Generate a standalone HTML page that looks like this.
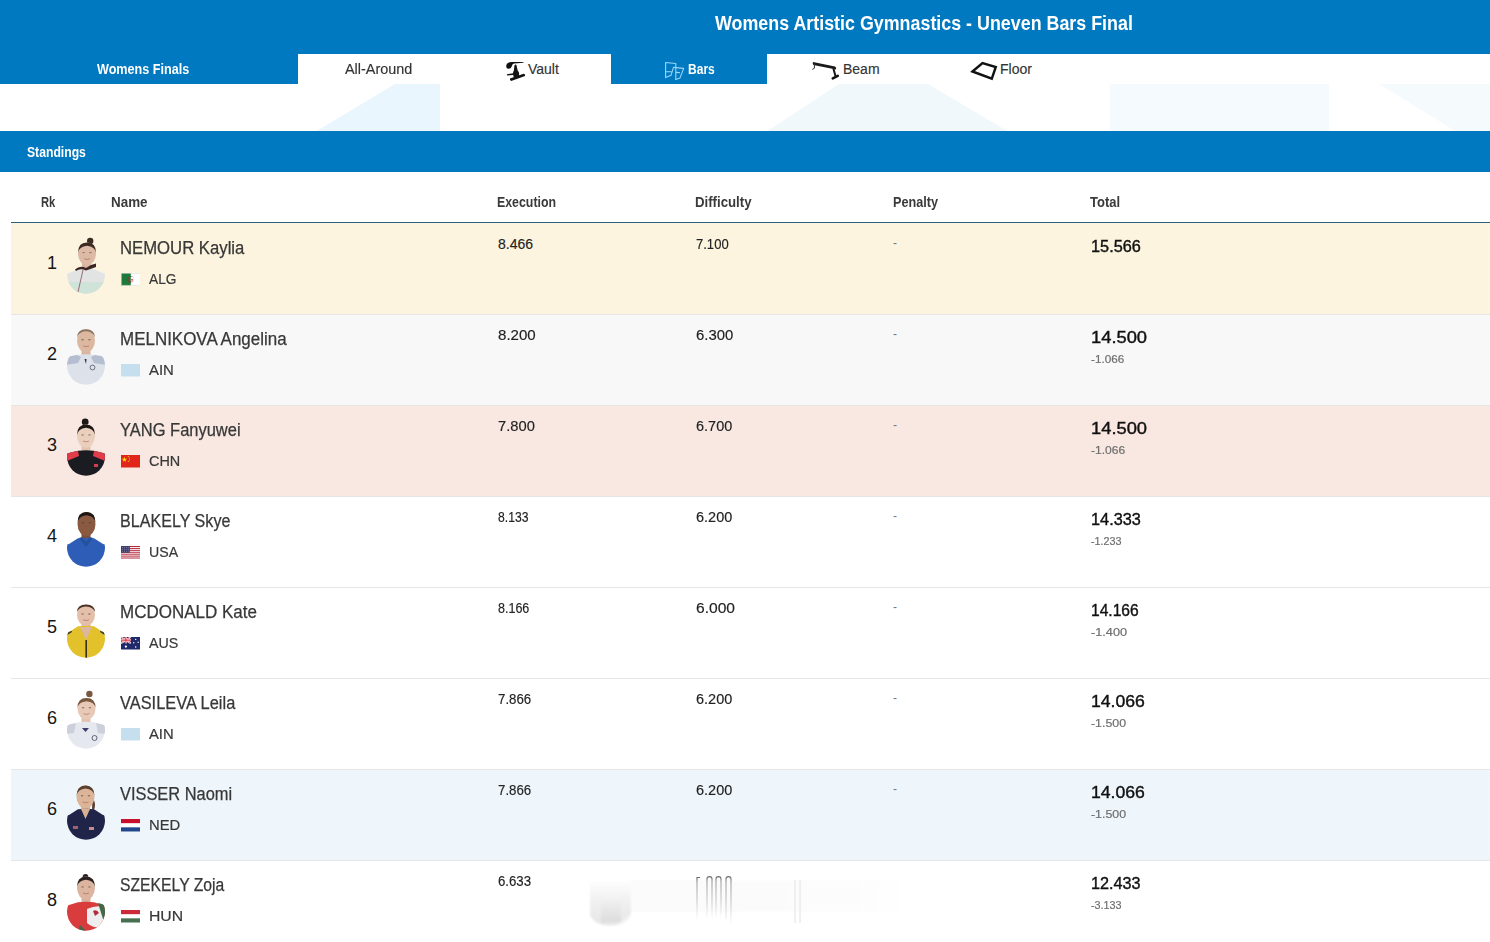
<!DOCTYPE html>
<html><head><meta charset="utf-8"><style>
*{margin:0;padding:0;box-sizing:border-box}
html,body{width:1490px;height:942px;overflow:hidden;background:#fff;font-family:"Liberation Sans",sans-serif;color:#333}
.a{position:absolute;white-space:nowrap;line-height:1;transform-origin:0 0}
.blue{position:absolute;background:#0079c1}
.wt{position:absolute;background:#fff}
.row{position:absolute;left:11px;width:1479px}
.sep{position:absolute;left:11px;width:1479px;height:1px;background:#e6e6e6}
.fl{position:absolute;left:120.6px;width:19.6px;height:12.5px;filter:blur(.3px)}
.ph{position:absolute;left:66px;width:40px;height:60px}
.tab{color:#333;font-size:14px;-webkit-text-stroke:.15px #333}
.wb{color:#fff;font-weight:bold;font-size:14px}
.hd{font-size:14px;font-weight:bold;color:#3a3a3a}
.rk{font-size:18px;color:#151515;text-align:right;width:30px;left:25px}
.nm{font-size:17.5px;color:#383838;left:120px;-webkit-text-stroke:.25px #383838}
.cc{font-size:15px;color:#383838;left:149px;-webkit-text-stroke:.2px #383838}
.v{font-size:14px;color:#222;-webkit-text-stroke:.15px #222}
.pen{font-size:12px;color:#777;left:893px}
.tot{font-size:17px;color:#111;left:1091px;-webkit-text-stroke:.4px #111}
.dif{font-size:11.5px;color:#6e6e6e;left:1091px;-webkit-text-stroke:.2px #6e6e6e}
</style></head><body>
<div class="blue" style="left:0;top:0;width:1490px;height:84px"></div>
<div class="a " style="left:715.0px;top:13.0px;transform:scaleX(0.8930);font-size:20px;font-weight:bold;color:#fff">Womens Artistic Gymnastics - Uneven Bars Final</div>
<div class="wt" style="left:298px;top:54px;width:313px;height:30px"></div>
<div class="wt" style="left:767px;top:54px;width:723px;height:30px"></div>
<div class="a wb" style="left:96.5px;top:62.0px;transform:scaleX(0.9000);">Womens Finals</div>
<div class="a tab" style="left:345.0px;top:62.3px;transform:scaleX(1.0300);">All-Around</div>
<div class="a tab" style="left:528.0px;top:62.0px;">Vault</div>
<div class="a wb" style="left:688.0px;top:62.0px;transform:scaleX(0.8600);">Bars</div>
<div class="a tab" style="left:843.0px;top:62.0px;">Beam</div>
<div class="a tab" style="left:1000.0px;top:62.0px;">Floor</div>
<svg style="position:absolute;left:0;top:84px" width="1490" height="48" viewBox="0 0 1490 48"><path d="M315 48L395 0H440V48Z" fill="#e9f6fd"/><path d="M766 48L839 0H928L1009 48Z" fill="#f1f8fc"/><path d="M1110 0H1329V48H1110Z" fill="#f4fafd"/><path d="M1379 0H1490V48H1457Z" fill="#f5fafd"/></svg>
<div class="blue" style="left:0;top:131px;width:1490px;height:41px"></div>
<div class="a wb" style="left:26.5px;top:145.0px;transform:scaleX(0.8700);">Standings</div>
<div class="a hd" style="left:41.2px;top:194.6px;transform:scaleX(0.8000);">Rk</div>
<div class="a hd" style="left:111.4px;top:194.6px;transform:scaleX(0.9580);">Name</div>
<div class="a hd" style="left:497.3px;top:194.6px;transform:scaleX(0.8830);">Execution</div>
<div class="a hd" style="left:694.5px;top:194.6px;transform:scaleX(0.9440);">Difficulty</div>
<div class="a hd" style="left:893.2px;top:194.6px;transform:scaleX(0.9030);">Penalty</div>
<div class="a hd" style="left:1090.4px;top:194.6px;transform:scaleX(0.9260);">Total</div>
<div style="position:absolute;left:11px;top:222px;width:1479px;height:1px;background:#2b5f7c"></div>
<div class="row" style="top:223px;height:91px;background:#fcf4de"></div>
<div class="sep" style="top:314px"></div>
<div class="a rk" style="left:27.0px;top:254.0px;">1</div>
<svg style="position:absolute;left:60px;top:232px;filter:blur(.35px)" width="52" height="66" viewBox="0 0 52 66"><defs><clipPath id="p0"><circle cx="26" cy="42.7" r="19"/></clipPath></defs><rect x="22" y="28" width="9" height="8" fill="#d8b4a0"/><g clip-path="url(#p0)"><path d="M5 66V43.0 Q6 41.4 9 41.0 L18 37.3 Q26 36.2 34 37.3 L43 41.0 Q46 41.4 47 43.0 V66Z" fill="#e2e4e4"/><rect x="5" y="50" width="42" height="16" fill="#cfe3d8"/><path d="M15 37.5 Q20 33 26 36 Q31 32 36 31.5 L36 35 Q30 37 26 38.5 Q20 36 16 39Z" fill="#3a2424"/><path d="M23 38 L18 60" stroke="#7a3a40" stroke-width=".7"/></g><circle cx="30.2" cy="9" r="3.2" fill="#3b2b22"/><ellipse cx="27.0" cy="21.8" rx="9.0" ry="11.2" fill="#dcbaa6"/><path d="M18.0 20.8 Q18.0 10.5 27.0 10.5 Q36.0 10.5 36.0 20.8 Q35.0 14.5 27.0 13.7 Q19.0 14.5 18.0 20.8Z" fill="#3b2b22"/><ellipse cx="23.6" cy="20.6" rx="1.3" ry=".7" fill="#4a3630" opacity=".55"/><ellipse cx="30.4" cy="20.6" rx="1.3" ry=".7" fill="#4a3630" opacity=".55"/><path d="M24.0 26.7 Q27.0 28.3 30.0 26.7" stroke="#9a5a50" stroke-width=".9" fill="none" opacity=".6"/></svg>
<div class="a nm" style="left:120.0px;top:240.0px;transform:scaleX(0.9544);">NEMOUR Kaylia</div>
<svg class="fl" style="top:273px" viewBox="0 0 20 13" preserveAspectRatio="none"><rect width="20" height="13" fill="#fff"/><rect width="10" height="13" fill="#1e7a3a"/><circle cx="10" cy="6.5" r="3" fill="#d21034"/><circle cx="10.9" cy="6.5" r="2.5" fill="#fff"/><rect x="7.4" y="3" width="2.6" height="7" fill="#1e7a3a"/><path d="M7.5 4.5A3 3 0 0 0 10 9.5" stroke="#d21034" stroke-width=".6" fill="none"/><path d="M11.2 5.5l.4 1 1-.1-.8.7.3 1-.9-.6-.8.6.3-1-.8-.7 1 .1z" fill="#d21034"/><rect x="0.3" y="0.3" width="19.4" height="12.4" fill="none" stroke="#ddd" stroke-width="0.6"/></svg>
<div class="a cc" style="left:149.0px;top:270.5px;transform:scaleX(0.9172);">ALG</div>
<div class="a v" style="left:498.0px;top:237.0px;">8.466</div>
<div class="a v" style="left:696.0px;top:237.0px;transform:scaleX(0.9314);">7.100</div>
<div class="a pen" style="left:893.0px;top:237.0px;">-</div>
<div class="a tot" style="left:1091.0px;top:238.0px;transform:scaleX(0.9590);">15.566</div>
<div class="row" style="top:315px;height:90px;background:#f8f8f8"></div>
<div class="sep" style="top:405px"></div>
<div class="a rk" style="left:27.0px;top:345.0px;">2</div>
<svg style="position:absolute;left:60px;top:323px;filter:blur(.35px)" width="52" height="66" viewBox="0 0 52 66"><defs><clipPath id="p1"><circle cx="26" cy="42.7" r="19"/></clipPath></defs><rect x="21.5" y="25" width="9" height="9" fill="#d9b49e"/><g clip-path="url(#p1)"><path d="M5 66V37.0 Q6 35.4 9 35.0 L18 31.8 Q26 30.7 34 31.8 L43 35.0 Q46 35.4 47 37.0 V66Z" fill="#dde1ea"/><path d="M5 36 Q8 33 17 32 L21 34 L18 40 L6 42Z" fill="#b4bed0"/><path d="M47 36 Q44 33 35 32 L31 34 L34 40 L46 42Z" fill="#b4bed0"/><path d="M24.5 36 L26.5 36 L26 41Z" fill="#2a2a3a"/><circle cx="32.5" cy="44.5" r="2.4" fill="none" stroke="#556" stroke-width=".8"/></g><ellipse cx="26.0" cy="17.8" rx="9.0" ry="11.5" fill="#ddb8a0"/><path d="M17.0 14.8 Q17.0 6.3 26.0 6.3 Q35.0 6.3 35.0 14.8 Q33.5 8.8 26.0 8.3 Q18.5 8.8 17.0 14.8Z" fill="#8b7560"/><ellipse cx="22.6" cy="16.7" rx="1.3" ry=".7" fill="#4a3630" opacity=".55"/><ellipse cx="29.4" cy="16.7" rx="1.3" ry=".7" fill="#4a3630" opacity=".55"/><path d="M23.0 22.9 Q26.0 24.5 29.0 22.9" stroke="#9a5a50" stroke-width=".9" fill="none" opacity=".6"/></svg>
<div class="a nm" style="left:120.0px;top:331.0px;transform:scaleX(0.9695);">MELNIKOVA Angelina</div>
<svg class="fl" style="top:364px" viewBox="0 0 20 13" preserveAspectRatio="none"><rect width="20" height="13" fill="#c5dfee"/></svg>
<div class="a cc" style="left:149.0px;top:361.5px;transform:scaleX(0.9954);">AIN</div>
<div class="a v" style="left:498.0px;top:328.0px;transform:scaleX(1.0771);">8.200</div>
<div class="a v" style="left:696.0px;top:328.0px;transform:scaleX(1.0629);">6.300</div>
<div class="a pen" style="left:893.0px;top:328.0px;">-</div>
<div class="a tot" style="left:1091.0px;top:329.0px;transform:scaleX(1.0780);">14.500</div>
<div class="a dif" style="left:1091.0px;top:354.1px;transform:scaleX(1.0160);">-1.066</div>
<div class="row" style="top:406px;height:90px;background:#f8e8e1"></div>
<div class="sep" style="top:496px"></div>
<div class="a rk" style="left:27.0px;top:436.0px;">3</div>
<svg style="position:absolute;left:60px;top:414px;filter:blur(.35px)" width="52" height="66" viewBox="0 0 52 66"><defs><clipPath id="p2"><circle cx="26" cy="42.7" r="19"/></clipPath></defs><rect x="21.5" y="29" width="9" height="9" fill="#e2c4ae"/><g clip-path="url(#p2)"><path d="M5 66V41.0 Q6 39.4 9 39.0 L18 36.7 Q26 35.6 34 36.7 L43 39.0 Q46 39.4 47 41.0 V66Z" fill="#1b1b22"/><path d="M5 42 Q8 38 18 37 L19 42 L7 47Z" fill="#e23c4a"/><path d="M47 42 Q44 38 34 37 L33 42 L45 47Z" fill="#e23c4a"/><rect x="34" y="50" width="4" height="3" fill="#d04050"/></g><circle cx="25.2" cy="8" r="3.4" fill="#1c1614"/><ellipse cx="26.0" cy="22.1" rx="9.0" ry="11.6" fill="#e9cfbc"/><path d="M17.0 21.1 Q17.0 10.5 26.0 10.5 Q35.0 10.5 35.0 21.1 Q34.0 14.5 26.0 13.7 Q18.0 14.5 17.0 21.1Z" fill="#1c1614"/><ellipse cx="22.6" cy="20.9" rx="1.3" ry=".7" fill="#4a3630" opacity=".55"/><ellipse cx="29.4" cy="20.9" rx="1.3" ry=".7" fill="#4a3630" opacity=".55"/><path d="M23.0 27.1 Q26.0 28.7 29.0 27.1" stroke="#9a5a50" stroke-width=".9" fill="none" opacity=".6"/></svg>
<div class="a nm" style="left:120.0px;top:422.0px;transform:scaleX(0.9417);">YANG Fanyuwei</div>
<svg class="fl" style="top:455px" viewBox="0 0 20 13" preserveAspectRatio="none"><rect width="20" height="13" fill="#e1251b"/><path d="M3.5 1.8l.7 2 2.1 0-1.7 1.3.6 2-1.7-1.2-1.7 1.2.6-2-1.7-1.3 2.1 0z" fill="#ffde00"/><circle cx="7.5" cy="1.6" r=".6" fill="#ffde00"/><circle cx="8.6" cy="3.2" r=".6" fill="#ffde00"/><circle cx="8.6" cy="5.2" r=".6" fill="#ffde00"/><circle cx="7.5" cy="6.8" r=".6" fill="#ffde00"/></svg>
<div class="a cc" style="left:149.0px;top:452.5px;transform:scaleX(0.9623);">CHN</div>
<div class="a v" style="left:498.0px;top:419.0px;transform:scaleX(1.0514);">7.800</div>
<div class="a v" style="left:696.0px;top:419.0px;transform:scaleX(1.0343);">6.700</div>
<div class="a pen" style="left:893.0px;top:419.0px;">-</div>
<div class="a tot" style="left:1091.0px;top:420.0px;transform:scaleX(1.0780);">14.500</div>
<div class="a dif" style="left:1091.0px;top:445.1px;transform:scaleX(1.0480);">-1.066</div>
<div class="row" style="top:497px;height:90px;background:#ffffff"></div>
<div class="sep" style="top:587px"></div>
<div class="a rk" style="left:27.0px;top:527.0px;">4</div>
<svg style="position:absolute;left:60px;top:505px;filter:blur(.35px)" width="52" height="66" viewBox="0 0 52 66"><defs><clipPath id="p3"><circle cx="26" cy="42.7" r="19"/></clipPath></defs><rect x="21.5" y="27" width="9" height="9" fill="#7e5038"/><g clip-path="url(#p3)"><path d="M5 66V41.0 Q6 39.4 9 39.0 L18 33.3 Q26 32.2 34 33.3 L43 39.0 Q46 39.4 47 41.0 V66Z" fill="#2d5db6"/><path d="M19 33 L26 42 L33 33 L30 32 L26 37 L22 32Z" fill="#24509e"/></g><ellipse cx="26.5" cy="19.0" rx="9.0" ry="12.0" fill="#8a5a40"/><path d="M17.5 18.0 Q17.5 7.0 26.5 7.0 Q35.5 7.0 35.5 18.0 Q34.5 11.0 26.5 10.2 Q18.5 11.0 17.5 18.0Z" fill="#1e1612"/><ellipse cx="23.1" cy="17.8" rx="1.3" ry=".7" fill="#4a3630" opacity=".55"/><ellipse cx="29.9" cy="17.8" rx="1.3" ry=".7" fill="#4a3630" opacity=".55"/><path d="M23.5 24.3 Q26.5 25.9 29.5 24.3" stroke="#9a5a50" stroke-width=".9" fill="none" opacity=".6"/></svg>
<div class="a nm" style="left:120.0px;top:513.0px;transform:scaleX(0.9203);">BLAKELY Skye</div>
<svg class="fl" style="top:546px" viewBox="0 0 20 13" preserveAspectRatio="none"><rect width="20" height="13" fill="#fff"/><rect y="0.00" width="20" height="1" fill="#b22234"/><rect y="2.00" width="20" height="1" fill="#b22234"/><rect y="4.00" width="20" height="1" fill="#b22234"/><rect y="6.00" width="20" height="1" fill="#b22234"/><rect y="8.00" width="20" height="1" fill="#b22234"/><rect y="10.00" width="20" height="1" fill="#b22234"/><rect y="12.00" width="20" height="1" fill="#b22234"/><rect width="9" height="7" fill="#3c3b6e"/><g fill="#c8c8dc"><rect x="1.0" y="1.0" width=".7" height=".7"/><rect x="3.0" y="1.0" width=".7" height=".7"/><rect x="5.0" y="1.0" width=".7" height=".7"/><rect x="7.0" y="1.0" width=".7" height=".7"/><rect x="1.0" y="3.0" width=".7" height=".7"/><rect x="3.0" y="3.0" width=".7" height=".7"/><rect x="5.0" y="3.0" width=".7" height=".7"/><rect x="7.0" y="3.0" width=".7" height=".7"/><rect x="1.0" y="5.0" width=".7" height=".7"/><rect x="3.0" y="5.0" width=".7" height=".7"/><rect x="5.0" y="5.0" width=".7" height=".7"/><rect x="7.0" y="5.0" width=".7" height=".7"/></g></svg>
<div class="a cc" style="left:149.0px;top:543.5px;transform:scaleX(0.9438);">USA</div>
<div class="a v" style="left:498.0px;top:510.0px;transform:scaleX(0.8686);">8.133</div>
<div class="a v" style="left:696.0px;top:510.0px;transform:scaleX(1.0343);">6.200</div>
<div class="a pen" style="left:893.0px;top:510.0px;">-</div>
<div class="a tot" style="left:1091.0px;top:511.0px;transform:scaleX(0.9590);">14.333</div>
<div class="a dif" style="left:1091.0px;top:536.1px;transform:scaleX(0.9380);">-1.233</div>
<div class="row" style="top:588px;height:90px;background:#ffffff"></div>
<div class="sep" style="top:678px"></div>
<div class="a rk" style="left:27.0px;top:618.0px;">5</div>
<svg style="position:absolute;left:60px;top:596px;filter:blur(.35px)" width="52" height="66" viewBox="0 0 52 66"><defs><clipPath id="p4"><circle cx="26" cy="42.7" r="19"/></clipPath></defs><rect x="21.5" y="26" width="9" height="9" fill="#dcb6a0"/><g clip-path="url(#p4)"><path d="M5 66V38.0 Q6 36.4 9 36.0 L18 30.3 Q26 29.2 34 30.3 L43 36.0 Q46 36.4 47 38.0 V66Z" fill="#e2c12a"/><path d="M20 31 L26 44 L32 31Z" fill="#dcb6a0"/><path d="M5 39 Q7 36 12 35 L12 36 L6 40Z" fill="#3a3a2a"/><path d="M47 39 Q45 36 40 35 L40 36 L46 40Z" fill="#3a3a2a"/><rect x="25.4" y="44" width="1.6" height="20" fill="#3a3020"/></g><ellipse cx="26.0" cy="19.1" rx="9.0" ry="10.7" fill="#e4c0aa"/><path d="M17.0 16.1 Q17.0 8.4 26.0 8.4 Q35.0 8.4 35.0 16.1 Q33.5 10.9 26.0 10.4 Q18.5 10.9 17.0 16.1Z" fill="#4a3528"/><ellipse cx="22.6" cy="18.0" rx="1.3" ry=".7" fill="#4a3630" opacity=".55"/><ellipse cx="29.4" cy="18.0" rx="1.3" ry=".7" fill="#4a3630" opacity=".55"/><path d="M23.0 23.8 Q26.0 25.4 29.0 23.8" stroke="#9a5a50" stroke-width=".9" fill="none" opacity=".6"/></svg>
<div class="a nm" style="left:120.0px;top:604.0px;transform:scaleX(0.9704);">MCDONALD Kate</div>
<svg class="fl" style="top:637px" viewBox="0 0 20 13" preserveAspectRatio="none"><rect width="20" height="13" fill="#1f2a6b"/><path d="M0 0L10 6.5M10 0L0 6.5" stroke="#fff" stroke-width="1.6"/><path d="M0 0L10 6.5M10 0L0 6.5" stroke="#e0333f" stroke-width=".6"/><path d="M5 0V6.5M0 3.25H10" stroke="#fff" stroke-width="2.2"/><path d="M5 0V6.5M0 3.25H10" stroke="#e0333f" stroke-width="1.2"/><circle cx="5" cy="10" r="1.2" fill="#fff"/><circle cx="15" cy="2.5" r=".7" fill="#fff"/><circle cx="13" cy="6" r=".7" fill="#fff"/><circle cx="17.5" cy="5.5" r=".7" fill="#fff"/><circle cx="15" cy="10.5" r=".8" fill="#fff"/></svg>
<div class="a cc" style="left:149.0px;top:634.5px;transform:scaleX(0.9504);">AUS</div>
<div class="a v" style="left:498.0px;top:601.0px;transform:scaleX(0.8943);">8.166</div>
<div class="a v" style="left:696.0px;top:601.0px;transform:scaleX(1.1143);">6.000</div>
<div class="a pen" style="left:893.0px;top:601.0px;">-</div>
<div class="a tot" style="left:1091.0px;top:602.0px;transform:scaleX(0.9180);">14.166</div>
<div class="a dif" style="left:1091.0px;top:627.1px;transform:scaleX(1.1060);">-1.400</div>
<div class="row" style="top:679px;height:90px;background:#ffffff"></div>
<div class="sep" style="top:769px"></div>
<div class="a rk" style="left:27.0px;top:709.0px;">6</div>
<svg style="position:absolute;left:60px;top:687px;filter:blur(.35px)" width="52" height="66" viewBox="0 0 52 66"><defs><clipPath id="p5"><circle cx="26" cy="42.7" r="19"/></clipPath></defs><rect x="21.5" y="28" width="9" height="9" fill="#e2c2b0"/><g clip-path="url(#p5)"><path d="M5 66V41.0 Q6 39.4 9 39.0 L18 35.3 Q26 34.2 34 35.3 L43 39.0 Q46 39.4 47 41.0 V66Z" fill="#e6e8ef"/><path d="M5 40 Q8 37 16 36 L14 46 L6 47Z" fill="#ccd0da"/><path d="M47 40 Q44 37 36 36 L38 46 L46 47Z" fill="#ccd0da"/><path d="M22 41 L29 41 L25.5 45Z" fill="#3d3d66"/><circle cx="34.5" cy="51" r="2.5" fill="none" stroke="#556" stroke-width=".9"/></g><circle cx="29.4" cy="7" r="3.2" fill="#7a5840"/><ellipse cx="26.5" cy="21.8" rx="9.0" ry="10.8" fill="#e8c9b8"/><path d="M17.5 20.8 Q17.5 11.0 26.5 11.0 Q35.5 11.0 35.5 20.8 Q34.5 15.0 26.5 14.2 Q18.5 15.0 17.5 20.8Z" fill="#7a5840"/><ellipse cx="23.1" cy="20.7" rx="1.3" ry=".7" fill="#4a3630" opacity=".55"/><ellipse cx="29.9" cy="20.7" rx="1.3" ry=".7" fill="#4a3630" opacity=".55"/><path d="M23.5 26.6 Q26.5 28.2 29.5 26.6" stroke="#9a5a50" stroke-width=".9" fill="none" opacity=".6"/></svg>
<div class="a nm" style="left:120.0px;top:695.0px;transform:scaleX(0.9379);">VASILEVA Leila</div>
<svg class="fl" style="top:728px" viewBox="0 0 20 13" preserveAspectRatio="none"><rect width="20" height="13" fill="#c5dfee"/></svg>
<div class="a cc" style="left:149.0px;top:725.5px;transform:scaleX(0.9870);">AIN</div>
<div class="a v" style="left:498.0px;top:692.0px;transform:scaleX(0.9486);">7.866</div>
<div class="a v" style="left:696.0px;top:692.0px;transform:scaleX(1.0343);">6.200</div>
<div class="a pen" style="left:893.0px;top:692.0px;">-</div>
<div class="a tot" style="left:1091.0px;top:693.0px;transform:scaleX(1.0370);">14.066</div>
<div class="a dif" style="left:1091.0px;top:718.1px;transform:scaleX(1.0750);">-1.500</div>
<div class="row" style="top:770px;height:90px;background:#eef6fc"></div>
<div class="sep" style="top:860px"></div>
<div class="a rk" style="left:27.0px;top:800.0px;">6</div>
<svg style="position:absolute;left:60px;top:778px;filter:blur(.35px)" width="52" height="66" viewBox="0 0 52 66"><defs><clipPath id="p6"><circle cx="26" cy="42.7" r="19"/></clipPath></defs><rect x="21" y="27" width="9" height="9" fill="#d8b094"/><path d="M32.5 20 Q36.5 25 34 32 L32 31Z" fill="#5a4030"/><g clip-path="url(#p6)"><path d="M5 66V39.0 Q6 37.4 9 37.0 L18 31.3 Q26 30.2 34 31.3 L43 37.0 Q46 37.4 47 39.0 V66Z" fill="#1f2448"/><path d="M21 31 L25.5 41 L30 31Z" fill="#d8b094"/><rect x="13" y="48" width="5" height="3" fill="#a06070"/><rect x="29" y="49" width="5" height="3" fill="#c09090"/></g><ellipse cx="25.5" cy="18.9" rx="9.0" ry="11.6" fill="#dcb498"/><path d="M16.5 17.9 Q16.5 7.4 25.5 7.4 Q34.5 7.4 34.5 17.9 Q33.5 11.4 25.5 10.6 Q17.5 11.4 16.5 17.9Z" fill="#5a4030"/><ellipse cx="22.1" cy="17.8" rx="1.3" ry=".7" fill="#4a3630" opacity=".55"/><ellipse cx="28.9" cy="17.8" rx="1.3" ry=".7" fill="#4a3630" opacity=".55"/><path d="M22.5 24.0 Q25.5 25.6 28.5 24.0" stroke="#9a5a50" stroke-width=".9" fill="none" opacity=".6"/></svg>
<div class="a nm" style="left:120.0px;top:786.0px;transform:scaleX(0.9371);">VISSER Naomi</div>
<svg class="fl" style="top:819px" viewBox="0 0 20 13" preserveAspectRatio="none"><rect width="20" height="13" fill="#fff"/><rect width="20" height="4.33" fill="#c8102e"/><rect y="8.67" width="20" height="4.33" fill="#21468b"/></svg>
<div class="a cc" style="left:149.0px;top:816.5px;transform:scaleX(0.9867);">NED</div>
<div class="a v" style="left:498.0px;top:783.0px;transform:scaleX(0.9486);">7.866</div>
<div class="a v" style="left:696.0px;top:783.0px;transform:scaleX(1.0343);">6.200</div>
<div class="a pen" style="left:893.0px;top:783.0px;">-</div>
<div class="a tot" style="left:1091.0px;top:784.0px;transform:scaleX(1.0370);">14.066</div>
<div class="a dif" style="left:1091.0px;top:809.1px;transform:scaleX(1.0750);">-1.500</div>
<div class="row" style="top:861px;height:90px;background:#ffffff"></div>
<div class="sep" style="top:951px"></div>
<div class="a rk" style="left:27.0px;top:891.0px;">8</div>
<svg style="position:absolute;left:60px;top:869px;filter:blur(.35px)" width="52" height="66" viewBox="0 0 52 66"><defs><clipPath id="p7"><circle cx="26" cy="42.7" r="19"/></clipPath></defs><rect x="21.5" y="26" width="9" height="9" fill="#d8b09c"/><g clip-path="url(#p7)"><path d="M5 66V38.0 Q6 36.4 9 36.0 L18 33.3 Q26 32.2 34 33.3 L43 36.0 Q46 36.4 47 38.0 V66Z" fill="#d93c3c"/><path d="M27 40 Q36 36 44 38 L44 58 Q34 60 27 54Z" fill="#eeeeee"/><path d="M38 34 Q45 35 47 39 V52 L43 50Z" fill="#3e6a4a"/><path d="M33 42 Q37 40 39 44 L35 47Z" fill="#b03040"/><path d="M20 56 L26 62 L18 62Z" fill="#3e6a4a"/></g><circle cx="25.5" cy="7.8" r="2.8" fill="#2a2020"/><ellipse cx="26.0" cy="19.0" rx="9.0" ry="11.5" fill="#dcb4a0"/><path d="M17.0 18.0 Q17.0 7.5 26.0 7.5 Q35.0 7.5 35.0 18.0 Q34.0 11.5 26.0 10.7 Q18.0 11.5 17.0 18.0Z" fill="#2a2020"/><ellipse cx="22.6" cy="17.9" rx="1.3" ry=".7" fill="#4a3630" opacity=".55"/><ellipse cx="29.4" cy="17.9" rx="1.3" ry=".7" fill="#4a3630" opacity=".55"/><path d="M23.0 24.1 Q26.0 25.7 29.0 24.1" stroke="#9a5a50" stroke-width=".9" fill="none" opacity=".6"/></svg>
<div class="a nm" style="left:120.0px;top:877.0px;transform:scaleX(0.8985);">SZEKELY Zoja</div>
<svg class="fl" style="top:910px" viewBox="0 0 20 13" preserveAspectRatio="none"><rect width="20" height="13" fill="#fff"/><rect width="20" height="4.33" fill="#ce2939"/><rect y="8.67" width="20" height="4.33" fill="#477050"/></svg>
<div class="a cc" style="left:149.0px;top:907.5px;transform:scaleX(1.0494);">HUN</div>
<div class="a v" style="left:498.0px;top:874.0px;transform:scaleX(0.9429);">6.633</div>
<div class="a tot" style="left:1091.0px;top:875.0px;transform:scaleX(0.9530);">12.433</div>
<div class="a dif" style="left:1091.0px;top:900.1px;transform:scaleX(0.9380);">-3.133</div>
<svg style="position:absolute;left:502px;top:58px" width="26" height="24" viewBox="0 0 26 24"><path d="M4.2 8.2Q4.3 4.3 9.8 4.1L21.3 4.1Q21.8 4.4 21.2 4.8L12 5.4Q10.4 5.7 9.8 8.2Q9 10.8 6.6 10.8Q4.1 10.6 4.2 8.2Z" fill="#111"/><path d="M12.4 7.6Q13.6 5.6 14.6 7.6L15.6 12.3L17 14.6L17.2 18.4L11.8 19.6L10.8 15.2L11.9 12.2Z" fill="#151515"/><path d="M5.1 16.2L11.8 15.2L12 16.7L5.3 17.6Q4.6 17 5.1 16.2Z" fill="#111"/><path d="M8 20.6L21.6 15.7Q23.4 15.8 23 18L9.2 22.9Q7.6 22.6 8 20.6Z" fill="#111"/></svg>
<svg style="position:absolute;left:660px;top:58px" width="28" height="24" viewBox="0 0 28 24" fill="none" stroke="#9ad6f7" stroke-width="1.1" stroke-linejoin="round" stroke-linecap="round"><path d="M5.6 19.6V4.5L15.8 5.5V21.4"/><path d="M5.6 19.6L11 17.3L13.5 9.4"/><path d="M13.5 9.4L23.7 10.4L20 19.9L15.8 21.4"/><path d="M16 14.4L19.5 14.6M5.6 13.8L11.3 13.8"/></svg>
<svg style="position:absolute;left:808px;top:58px" width="34" height="24" viewBox="0 0 34 24"><path d="M5 4L27 8.4Q28.8 9.4 28 11.6L5.4 7Q4.2 5.6 5 4Z" fill="#1a1a1a"/><path d="M6.4 5.8V10.2L4.3 11.5" stroke="#333" stroke-width="1" fill="none"/><path d="M25.4 10.5L27.6 18.4" stroke="#151515" stroke-width="2" fill="none"/><path d="M24.8 20.4L29.8 17.9" stroke="#151515" stroke-width="2.6" stroke-linecap="round" fill="none"/></svg>
<svg style="position:absolute;left:968px;top:58px" width="32" height="24" viewBox="0 0 32 24"><path d="M4.5 13.5L14.5 5L27.8 9L23.8 20.6Z" fill="none" stroke="#111" stroke-width="2.4" stroke-linejoin="miter"/></svg>
<svg style="position:absolute;left:580px;top:868px;filter:blur(.8px)" width="330" height="64" viewBox="0 0 330 64"><defs><linearGradient id="sg" x1="0" y1="0" x2="0" y2="1"><stop offset="0" stop-color="#8a8a8a"/><stop offset=".55" stop-color="#c8c8c8"/><stop offset="1" stop-color="#ffffff"/></linearGradient><linearGradient id="sg2" x1="0" y1="0" x2="0" y2="1"><stop offset="0" stop-color="#f6f6f6"/><stop offset=".6" stop-color="#e2e2e2"/><stop offset="1" stop-color="#d4d4d4"/></linearGradient><linearGradient id="sg3" x1="0" y1="0" x2="0" y2="1"><stop offset="0" stop-color="#ffffff"/><stop offset=".4" stop-color="#f2f2f2"/><stop offset="1" stop-color="#e6e6e6"/></linearGradient></defs><linearGradient id="bd" x1="0" y1="0" x2="1" y2="0"><stop offset="0" stop-color="#fbfbfb"/><stop offset=".8" stop-color="#fcfcfc"/><stop offset="1" stop-color="#fff"/></linearGradient><rect x="10" y="12" width="315" height="32" fill="url(#bd)"/><path d="M10 12H51V46Q40 57 30 57Q14 57 10 46Z" fill="url(#sg3)"/><rect x="21" y="27" width="20" height="27" fill="url(#sg2)" opacity=".6"/><path d="M11 46Q14 57 30 57Q44 57 50 48" fill="none" stroke="#e4e4e4" stroke-width="1"/></svg>
<svg style="position:absolute;left:580px;top:868px" width="330" height="64" viewBox="0 0 330 64"><defs><linearGradient id="sgx" x1="0" y1="0" x2="0" y2="1"><stop offset="0" stop-color="#6a6a6a"/><stop offset=".12" stop-color="#a8a8a8"/><stop offset=".6" stop-color="#d4d4d4"/><stop offset="1" stop-color="#ffffff"/></linearGradient></defs><g fill="none" stroke="url(#sgx)" stroke-width="1.2"><path d="M117 52V9.5H120"/><path d="M127 51V11Q127 8.6 129.5 8.6Q132 8.6 132 11V51"/><path d="M136 51V11Q136 8.6 138.5 8.6Q141 8.6 141 11V51"/><path d="M146 51V11Q146 8.6 148.5 8.6Q151 8.6 151 11V54Q151 57 147 57"/></g><path d="M215 12V55M220 12V55" stroke="#e6e6e6" stroke-width="1.2"/></svg>
</body></html>
